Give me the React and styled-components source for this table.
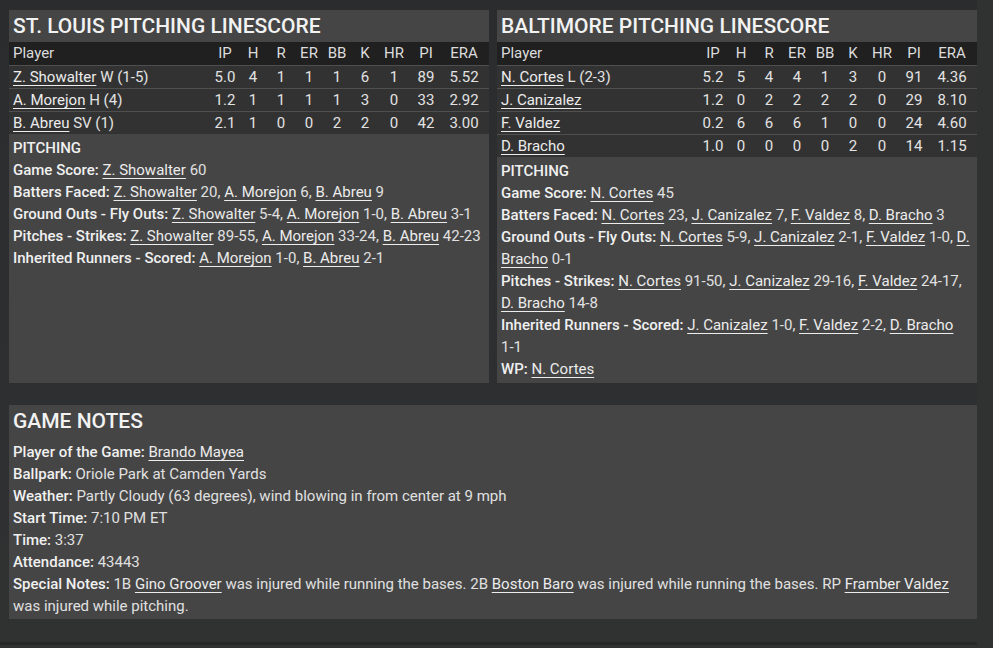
import React from "react";
import styled, { createGlobalStyle } from "styled-components";

const GlobalStyle = createGlobalStyle`
  html, body {
    margin: 0;
    padding: 0;
    background: #303232;
  }
  body {
    font-family: Roboto, "Liberation Sans", Arial, sans-serif;
    font-size: 15px;
    color: #e2e2e2;
  }
`;

const Page = styled.div`
  width: 977px;
  height: 645px;
  box-sizing: border-box;
  padding: 10px 0 0 9px;
  background: linear-gradient(180deg, #2a2c2d 0%, #2d2f30 60%, #303232 100%);
  border-bottom: 3px solid #272929;
`;

const Columns = styled.div`
  display: grid;
  grid-template-columns: 480px 480px;
  gap: 8px;
  margin-bottom: 22px;
`;

const Panel = styled.section`
  background: #454545;
  display: flex;
  flex-direction: column;
`;

const Title = styled.h2`
  margin: 0;
  padding: 0 4px;
  height: 32px;
  line-height: 32px;
  font-size: 21px;
  font-weight: 500;
  color: #f2f2f2;
`;

const COLS = "1fr 28px 28px 28px 28px 28px 28px 30px 34px 42px";

const HeadRow = styled.div`
  display: grid;
  grid-template-columns: ${COLS};
  height: 23px;
  line-height: 23px;
  padding: 0 4px;
  background: #202020;
  color: #dcdcdc;
`;

const Row = styled.div`
  display: grid;
  grid-template-columns: ${COLS};
  height: 22px;
  line-height: 22px;
  padding: 0 4px;
  background: #323232;
  border-top: 1px solid #4f4f4f;
  color: #e2e2e2;
`;

const Cell = styled.span`
  text-align: ${({ $left }) => ($left ? "left" : "center")};
  white-space: nowrap;
`;

const Name = styled.a`
  color: #ececec;
  text-decoration: underline;
  text-underline-offset: 3px;
  text-decoration-thickness: 1px;
  cursor: pointer;
`;

const Value = styled.span`
  white-space: nowrap;
`;

const Notes = styled.div`
  padding: 3px 4px 3px;
  line-height: 22px;
  flex: 1;
`;

const Heading = styled.div`
  font-weight: 500;
  color: #f0f0f0;
`;

const Line = styled.div`
  color: #e0e0e0;
`;

const Label = styled.span`
  font-weight: 500;
  color: #f0f0f0;
`;

const NotesPanel = styled.section`
  background: #454545;
  width: 968px;
`;

const Body = styled.div`
  padding: 4px 4px 2px;
  line-height: 22px;
`;

const stl = [
  ["Z. Showalter", " W (1-5)", "5.0", 4, 1, 1, 1, 6, 1, 89, "5.52"],
  ["A. Morejon", " H (4)", "1.2", 1, 1, 1, 1, 3, 0, 33, "2.92"],
  ["B. Abreu", " SV (1)", "2.1", 1, 0, 0, 2, 2, 0, 42, "3.00"],
];

const bal = [
  ["N. Cortes", " L (2-3)", "5.2", 5, 4, 4, 1, 3, 0, 91, "4.36"],
  ["J. Canizalez", "", "1.2", 0, 2, 2, 2, 2, 0, 29, "8.10"],
  ["F. Valdez", "", "0.2", 6, 6, 6, 1, 0, 0, 24, "4.60"],
  ["D. Bracho", "", "1.0", 0, 0, 0, 0, 2, 0, 14, "1.15"],
];

const heads = ["IP", "H", "R", "ER", "BB", "K", "HR", "PI", "ERA"];

// list of [name, value] pairs rendered as "Name value, Name value"
const Pairs = ({ items }) =>
  items.map(([n, v], i) => (
    <React.Fragment key={n}>
      <Name>{n}</Name> <Value>{v}{i < items.length - 1 ? "," : ""}</Value>{" "}
    </React.Fragment>
  ));

const Linescore = ({ title, rows, notes }) => (
  <Panel>
    <Title>{title}</Title>
    <HeadRow>
      <Cell $left>Player</Cell>
      {heads.map((h) => (
        <Cell key={h}>{h}</Cell>
      ))}
    </HeadRow>
    {rows.map(([name, dec, ...stats]) => (
      <Row key={name}>
        <Cell $left>
          <Name>{name}</Name>
          {dec}
        </Cell>
        {stats.map((s, i) => (
          <Cell key={i}>{s}</Cell>
        ))}
      </Row>
    ))}
    <Notes>
      <Heading>PITCHING</Heading>
      {notes.map(([label, items]) => (
        <Line key={label}>
          <Label>{label}:</Label> <Pairs items={items} />
        </Line>
      ))}
    </Notes>
  </Panel>
);

const stlNotes = [
  ["Game Score", [["Z. Showalter", "60"]]],
  ["Batters Faced", [["Z. Showalter", "20"], ["A. Morejon", "6"], ["B. Abreu", "9"]]],
  ["Ground Outs - Fly Outs", [["Z. Showalter", "5-4"], ["A. Morejon", "1-0"], ["B. Abreu", "3-1"]]],
  ["Pitches - Strikes", [["Z. Showalter", "89-55"], ["A. Morejon", "33-24"], ["B. Abreu", "42-23"]]],
  ["Inherited Runners - Scored", [["A. Morejon", "1-0"], ["B. Abreu", "2-1"]]],
];

const balNotes = [
  ["Game Score", [["N. Cortes", "45"]]],
  ["Batters Faced", [["N. Cortes", "23"], ["J. Canizalez", "7"], ["F. Valdez", "8"], ["D. Bracho", "3"]]],
  ["Ground Outs - Fly Outs", [["N. Cortes", "5-9"], ["J. Canizalez", "2-1"], ["F. Valdez", "1-0"], ["D. Bracho", "0-1"]]],
  ["Pitches - Strikes", [["N. Cortes", "91-50"], ["J. Canizalez", "29-16"], ["F. Valdez", "24-17"], ["D. Bracho", "14-8"]]],
  ["Inherited Runners - Scored", [["J. Canizalez", "1-0"], ["F. Valdez", "2-2"], ["D. Bracho", "1-1"]]],
  ["WP", [["N. Cortes", ""]]],
];

export default function App() {
  return (
    <>
      <GlobalStyle />
      <Page>
        <Columns>
          <Linescore title="ST. LOUIS PITCHING LINESCORE" rows={stl} notes={stlNotes} />
          <Linescore title="BALTIMORE PITCHING LINESCORE" rows={bal} notes={balNotes} />
        </Columns>
        <NotesPanel>
          <Title>GAME NOTES</Title>
          <Body>
            <Line>
              <Label>Player of the Game:</Label> <Name>Brando Mayea</Name>
            </Line>
            <Line>
              <Label>Ballpark:</Label> Oriole Park at Camden Yards
            </Line>
            <Line>
              <Label>Weather:</Label> Partly Cloudy (63 degrees), wind blowing in from center at 9 mph
            </Line>
            <Line>
              <Label>Start Time:</Label> 7:10 PM ET
            </Line>
            <Line>
              <Label>Time:</Label> 3:37
            </Line>
            <Line>
              <Label>Attendance:</Label> 43443
            </Line>
            <Line>
              <Label>Special Notes:</Label> 1B <Name>Gino Groover</Name> was injured while running the
              bases. 2B <Name>Boston Baro</Name> was injured while running the bases. RP{" "}
              <Name>Framber Valdez</Name> was injured while pitching.
            </Line>
          </Body>
        </NotesPanel>
      </Page>
    </>
  );
}
